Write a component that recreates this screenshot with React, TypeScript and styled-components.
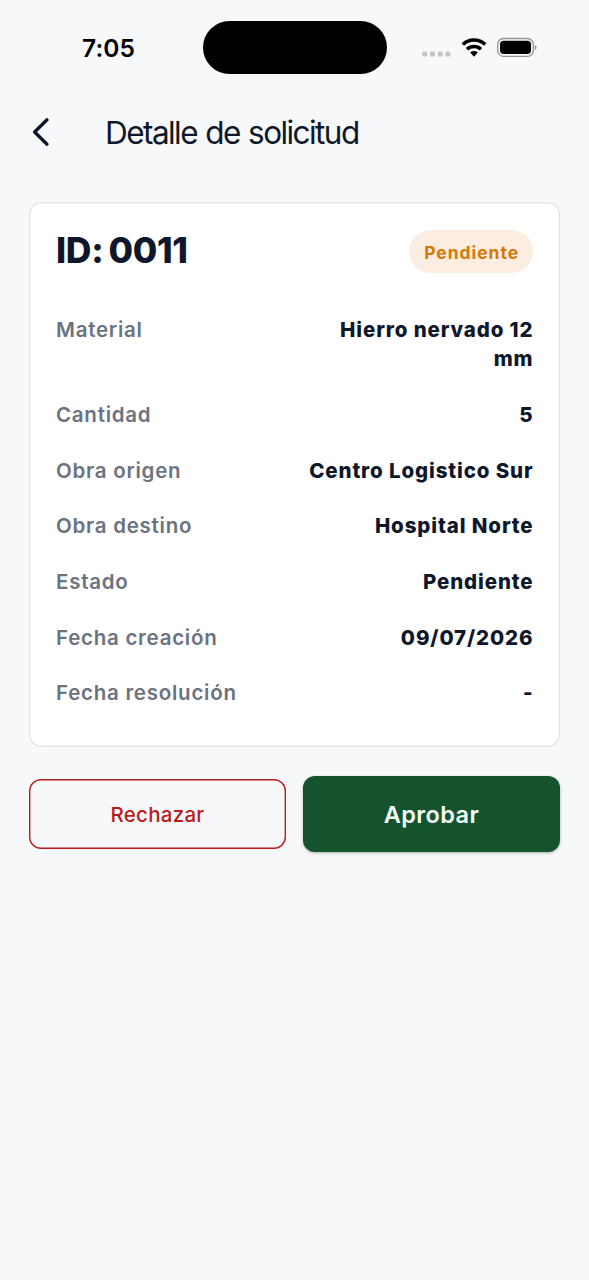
import React from 'react';
import styled, { createGlobalStyle } from 'styled-components';

const Global = createGlobalStyle`
  * { box-sizing: border-box; }
  body { margin: 0; background: #f7f8fa; font-family: Inter, "Liberation Sans", sans-serif; color: #0f172a; }
`;
const Screen = styled.div`min-height: 1280px; background: #f7f8fa;`;
const StatusBar = styled.div`
  height: 95px; padding: 20.5px 52px 0 82px; display: grid; grid-template-columns: 120.5px 184px 1fr; align-items: start;
`;
const Time = styled.div`font-size: 24.5px; line-height: 55px; font-weight: 560; color: #000; letter-spacing: 0.1px;`;
const Island = styled.div`height: 53.5px; border-radius: 27px; background: #000;`;
const StatusIcons = styled.div`height: 55px; display: flex; align-items: center; justify-content: flex-end;`;
const Header = styled.header`height: 75px; padding-left: 30px; display: flex; align-items: center;`;
const Back = styled.button`border: 0; background: none; padding: 0 0 2px; width: 75px; display: flex; color: #0f172a;`;
const Title = styled.h1`margin: 0; font-size: 31.5px; font-weight: 380; letter-spacing: -1.56px; word-spacing: 1px; line-height: 40px;`;
const Content = styled.main`padding: 32.4px 29.3px 0;`;
const Card = styled.section`
  height: 544.3px; box-shadow: inset 0 0 0 1.4px #e2e5ea; border-radius: 12px; background: #fff; padding: 27.4px 26.7px 0;
`;
const CardHead = styled.div`display: flex; justify-content: space-between; align-items: center; height: 43px; margin-bottom: 42px;`;
const Ident = styled.h2`margin: 0; font-size: 35.5px; font-weight: 800; letter-spacing: -0.3px; word-spacing: -2.4px; line-height: 40px; padding-bottom: 1px;`;
const Badge = styled.span`
  height: 43px; padding: 0 14px 0 15px; border-radius: 22px; background: #fbeee1; color: #d97706;
  font-size: 17.5px; font-weight: 720; line-height: 45px; letter-spacing: 0.95px;
`;
const Row = styled.div`display: flex; justify-content: space-between; line-height: 29.4px; margin-bottom: 26.3px;`;
const Label = styled.span`font-size: 20.5px; font-weight: 620; color: #6b7280; letter-spacing: 0.75px;`;
const Value = styled.span`width: 229px; font-size: 20.5px; font-weight: 770; text-align: right; letter-spacing: 0.88px; margin-right: -0.5px;`;
const Actions = styled.div`display: flex; align-items: center; gap: 17.5px; margin-top: 29.6px;`;
const Reject = styled.button`
  flex: 1; height: 70px; border: 0; box-shadow: inset 0 0 0 1.4px #b91c1c; border-radius: 12px; background: transparent; color: #b91c1c;
  font: 450 20.5px Inter, sans-serif; letter-spacing: 0.25px;
`;
const Approve = styled.button`
  flex: 1; height: 76px; border: 0; border-radius: 12px; background: #14532d; color: #f7fff9;
  font: 620 23.5px Inter, sans-serif; letter-spacing: 0.4px; box-shadow: 0 1px 3px rgba(0,0,0,.3);
`;

const rows = [
  ['Material', 'Hierro nervado 12 mm'],
  ['Cantidad', '5'],
  ['Obra origen', 'Centro Logistico Sur'],
  ['Obra destino', 'Hospital Norte'],
  ['Estado', 'Pendiente'],
  ['Fecha creación', '09/07/2026'],
  ['Fecha resolución', '-'],
];

export default function App() {
  return (
    <Screen>
      <Global />
      <StatusBar>
        <Time>7:05</Time>
        <Island />
        <StatusIcons>
          <svg width="116" height="24" viewBox="0 0 116 24">
            <g fill="#c4c5c7">
              <rect x="1.2" y="15.5" width="5" height="5" rx="1.5" /><rect x="9" y="15.5" width="5" height="5" rx="1.5" />
              <rect x="16.8" y="15.5" width="5" height="5" rx="1.5" /><rect x="24.5" y="15.5" width="5" height="5" rx="1.5" />
            </g>
            <g fill="none" stroke="#000" strokeWidth="3.5" >
              <path d="M41.8 8.6a16.2 16.2 0 0 1 22.4 0" /><path d="M46 13.2a10.2 10.2 0 0 1 14 0" />
            </g>
            <path d="M49.2 16.6a5.6 5.6 0 0 1 7.6 0L53 20.7z" />
            <rect x="76.7" y="2.5" width="35.6" height="17.8" rx="5.8" fill="none" stroke="#949494" strokeWidth="1.3" />
            <rect x="79" y="4.8" width="31" height="13.2" rx="3.7" /><path d="M113.8 8.9c2.4 1 2.4 4.2 0 5.2z" fill="#949494" />
          </svg>
        </StatusIcons>
      </StatusBar>
      <Header>
        <Back aria-label="Volver">
          <svg width="22" height="32" viewBox="0 0 22 32" fill="none" stroke="currentColor" strokeWidth="3.3" strokeLinecap="round" strokeLinejoin="round"><path d="M17 3.8 4.6 16 17 28.2" /></svg>
        </Back>
        <Title>Detalle de solicitud</Title>
      </Header>
      <Content>
        <Card>
          <CardHead><Ident>ID: 0011</Ident><Badge>Pendiente</Badge></CardHead>
          {rows.map(([label, value]) => <Row key={label}><Label>{label}</Label><Value>{value}</Value></Row>)}
        </Card>
        <Actions><Reject>Rechazar</Reject><Approve>Aprobar</Approve></Actions>
      </Content>
    </Screen>
  );
}
